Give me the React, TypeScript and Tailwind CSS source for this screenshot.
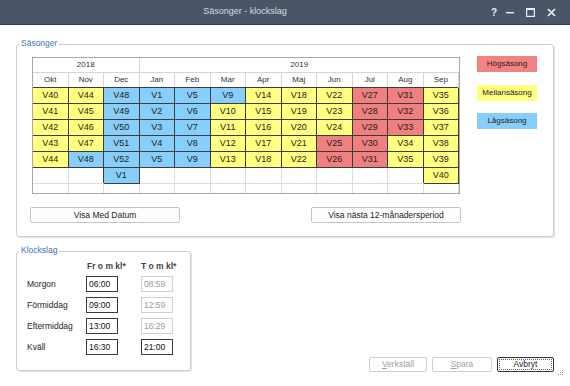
import React from "react";

type Season = "y" | "b" | "r";
type Cell = [string, Season] | null;

const months = ["Okt", "Nov", "Dec", "Jan", "Feb", "Mar", "Apr", "Maj", "Jun", "Jul", "Aug", "Sep"];

// one list per month column, top to bottom
const weeks: [string, Season][][] = [
  [["V40", "y"], ["V41", "y"], ["V42", "y"], ["V43", "y"], ["V44", "y"]],
  [["V44", "y"], ["V45", "y"], ["V46", "y"], ["V47", "y"], ["V48", "b"]],
  [["V48", "b"], ["V49", "b"], ["V50", "b"], ["V51", "b"], ["V52", "b"], ["V1", "b"]],
  [["V1", "b"], ["V2", "b"], ["V3", "b"], ["V4", "b"], ["V5", "b"]],
  [["V5", "b"], ["V6", "b"], ["V7", "b"], ["V8", "b"], ["V9", "b"]],
  [["V9", "b"], ["V10", "y"], ["V11", "y"], ["V12", "y"], ["V13", "y"]],
  [["V14", "y"], ["V15", "y"], ["V16", "y"], ["V17", "y"], ["V18", "y"]],
  [["V18", "y"], ["V19", "y"], ["V20", "y"], ["V21", "y"], ["V22", "y"]],
  [["V22", "y"], ["V23", "y"], ["V24", "y"], ["V25", "r"], ["V26", "r"]],
  [["V27", "r"], ["V28", "r"], ["V29", "r"], ["V30", "r"], ["V31", "r"]],
  [["V31", "r"], ["V32", "r"], ["V33", "r"], ["V34", "y"], ["V35", "y"]],
  [["V35", "y"], ["V36", "y"], ["V37", "y"], ["V38", "y"], ["V39", "y"], ["V40", "y"]],
];

const bg: Record<Season, string> = {
  y: "bg-[#ffff80]",
  b: "bg-[#87cefa]",
  r: "bg-[#f08080]",
};

const times = [
  { label: "Morgon", from: "06:00", to: "08:59", toOn: false },
  { label: "Förmiddag", from: "09:00", to: "12:59", toOn: false },
  { label: "Eftermiddag", from: "13:00", to: "16:29", toOn: false },
  { label: "Kväll", from: "16:30", to: "21:00", toOn: true },
];

function WeekCell({ cell }: { cell: Cell }) {
  if (!cell) {
    return <div className="h-[16px] border-r border-b border-[#dcdcdc] bg-white" />;
  }
  return (
    <div
      className={`flex h-[16px] items-center justify-center border-r border-b border-[#3c3c3c] text-[9px] text-[#1e1e1e] shadow-[-1px_-1px_0_#3c3c3c] ${bg[cell[1]]}`}
    >
      {cell[0]}
    </div>
  );
}

function TimeBox({ value, on }: { value: string; on: boolean }) {
  return (
    <div
      className={`flex h-[16px] w-[32px] items-center border px-[2px] text-[8.5px] ${
        on ? "border-[#3a3a3a] text-[#111]" : "border-[#cfcfcf] text-[#9a9a9a]"
      }`}
    >
      {value}
    </div>
  );
}

export default function App() {
  const rows: Cell[][] = [];
  for (let r = 0; r < 7; r++) {
    rows.push(weeks.map((col) => col[r] ?? null));
  }

  return (
    <div className="flex h-[386px] w-[570px] flex-col overflow-hidden bg-white font-['Liberation_Sans',Arial,sans-serif] text-[8.5px] text-[#1e1e1e]">
      {/* title bar */}
      <div className="flex h-[25px] shrink-0 items-center border-b border-[#363d48] bg-[#4a5567]">
        <div className="flex flex-1 justify-center pl-[8px] text-[9px] text-[#d6dae0]">Säsonger - klockslag</div>
        <div className="flex w-[88px] items-center text-[#eef0f3]">
          <span className="ml-[7px] w-[10px] text-center text-[10px] font-bold">?</span>
          <svg className="ml-[7px]" width="8" height="8" viewBox="0 0 8 8">
            <rect x="0" y="4" width="8" height="1.4" fill="currentColor" />
          </svg>
          <svg className="ml-[12px]" width="9" height="9" viewBox="0 0 9 9">
            <rect x="0.6" y="0.6" width="7.8" height="7.8" fill="none" stroke="currentColor" strokeWidth="1.2" />
            <rect x="0" y="0" width="9" height="2" fill="currentColor" />
          </svg>
          <svg className="ml-[12px]" width="9" height="9" viewBox="0 0 9 9">
            <path d="M1 1 L8 8 M8 1 L1 8" stroke="currentColor" strokeWidth="1.7" />
          </svg>
        </div>
      </div>

      <div className="relative flex flex-1 flex-col px-[16px]">
        {/* Säsonger */}
        <div className="relative mt-[19px] h-[193px] rounded-[3px] border border-[#cdcdcd] pl-[13px] pt-[12px] shadow-[1px_1px_1px_rgba(0,0,0,0.12)]">
          <span className="absolute -top-[7px] left-[2px] bg-white px-[2px] leading-[10px] text-[#3b73b9]">Säsonger</span>
          <div className="flex items-start">
            <div className="ml-[2px] h-[137px] w-[428px] overflow-hidden border border-[#a8a8a8]">
              <div className="grid grid-cols-12">
                <div className="col-span-3 flex h-[15px] items-center justify-center border-r border-b border-[#d4d4d4] text-[8px] text-[#333]">2018</div>
                <div className="col-span-9 flex h-[15px] items-center justify-center border-b border-[#d4d4d4] text-[8px] text-[#333]">2019</div>
                {months.map((m) => (
                  <div key={m} className="flex h-[15px] items-center justify-center border-r border-b border-[#d4d4d4] text-[8px] text-[#333]">
                    {m}
                  </div>
                ))}
                {rows.map((row, r) => row.map((cell, c) => <WeekCell key={`${r}-${c}`} cell={cell} />))}
              </div>
            </div>
            <div className="-mt-[1px] ml-[17px] flex flex-col gap-[12.5px]">
              <div className="flex h-[16px] w-[60px] items-center justify-center bg-[#f48284] text-[8px] text-[#222]">Högsäsong</div>
              <div className="flex h-[16px] w-[60px] items-center justify-center bg-[#ffff80] text-[8px] text-[#222]">Mellansäsong</div>
              <div className="flex h-[16px] w-[60px] items-center justify-center bg-[#87cefa] text-[8px] text-[#222]">Lågsäsong</div>
            </div>
          </div>
          <div className="mt-[13px] flex">
            <button className="h-[16px] w-[150px] rounded-[2px] border border-[#c4c4c4] bg-[#fdfdfd] text-[8.5px]">Visa Med Datum</button>
            <button className="ml-[131px] h-[16px] w-[150px] rounded-[2px] border border-[#c4c4c4] bg-[#fdfdfd] text-[8.5px]">
              Visa nästa 12-månadersperiod
            </button>
          </div>
        </div>

        <div className="mt-[14px] flex items-end justify-between">
          {/* Klockslag */}
          <div className="relative h-[120px] w-[175px] rounded-[3px] border border-[#cdcdcd] pl-[10px] pt-[9px] shadow-[1px_1px_1px_rgba(0,0,0,0.12)]">
            <span className="absolute -top-[7px] left-[2px] bg-white px-[2px] leading-[10px] text-[#3b73b9]">Klockslag</span>
            <div className="grid grid-cols-[59px_55px_32px] items-center gap-y-[5px]">
              <div className="h-[10px]" />
              <div className="whitespace-nowrap pl-[1px] text-[8.5px] font-bold leading-[10px] text-[#444]">Fr o m kl*</div>
              <div className="whitespace-nowrap text-[8.5px] font-bold leading-[10px] text-[#444]">T o m kl*</div>
              {times.map((t) => (
                <React.Fragment key={t.label}>
                  <div className="whitespace-nowrap">{t.label}</div>
                  <TimeBox value={t.from} on />
                  <TimeBox value={t.to} on={t.toOn} />
                </React.Fragment>
              ))}
            </div>
          </div>

          <div className="-mb-[1px] flex gap-[5px]">
            <button className="h-[15px] w-[58px] rounded-[2px] border border-[#cfcfcf] bg-white text-[8.5px] text-[#a0a0a0]">
              <span className="underline">V</span>erkställ
            </button>
            <button className="h-[15px] w-[60px] rounded-[2px] border border-[#cfcfcf] bg-white text-[8.5px] text-[#a0a0a0]">
              <span className="underline">S</span>para
            </button>
            <button className="h-[15px] w-[57px] rounded-[2px] border border-[#333] bg-white text-[8.5px] outline-1 outline-offset-[-3px] outline-[#666] outline-dotted">
              Avbryt
            </button>
          </div>
        </div>

        <svg className="absolute bottom-[10px] right-[6px]" width="6" height="6" viewBox="0 0 6 6">
          <rect x="4" y="0" width="1" height="1" fill="#9a9a9a" />
          <rect x="2" y="2" width="1" height="1" fill="#9a9a9a" />
          <rect x="4" y="2" width="1" height="1" fill="#9a9a9a" />
          <rect x="0" y="4" width="1" height="1" fill="#9a9a9a" />
          <rect x="2" y="4" width="1" height="1" fill="#9a9a9a" />
          <rect x="4" y="4" width="1" height="1" fill="#9a9a9a" />
        </svg>
      </div>
    </div>
  );
}
